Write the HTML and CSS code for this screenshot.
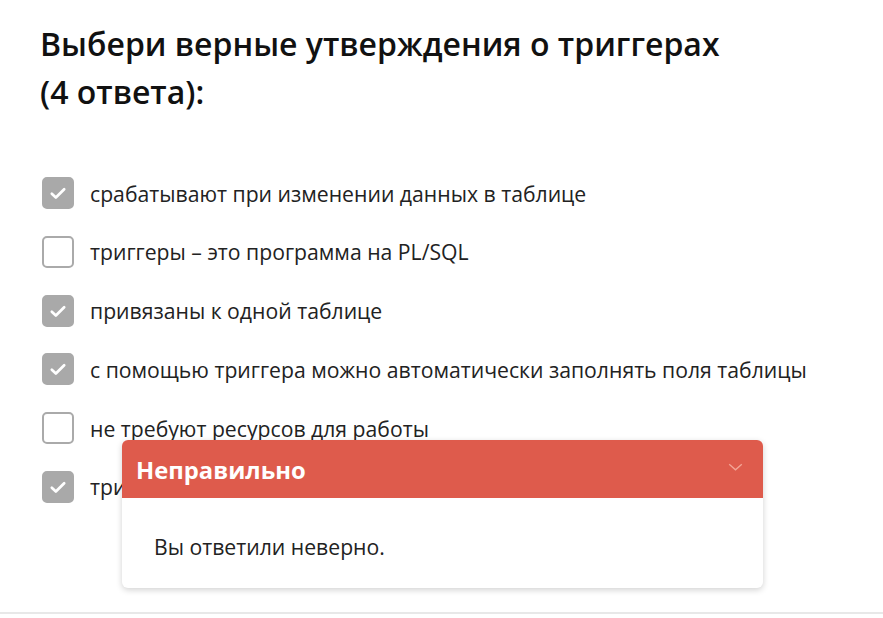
FILE: index.html
```html
<!DOCTYPE html>
<html lang="ru">
<head>
<meta charset="utf-8">
<link rel="stylesheet" href="styles.css">
</head>
<body>
<div class="page">
  <h1 class="title">Выбери верные утверждения о триггерах<br>(4 ответа):</h1>
  <ul class="options">
    <li class="option"><span class="box checked"><svg viewBox="0 0 16 16" width="18" height="18"><path d="M2.5 8.6l3.6 3.4L13.5 4.6" fill="none" stroke="#fff" stroke-width="2.4" stroke-linecap="round" stroke-linejoin="round"/></svg></span>срабатывают при изменении данных в таблице</li>
    <li class="option"><span class="box"></span>триггеры – это программа на PL/SQL</li>
    <li class="option"><span class="box checked"><svg viewBox="0 0 16 16" width="18" height="18"><path d="M2.5 8.6l3.6 3.4L13.5 4.6" fill="none" stroke="#fff" stroke-width="2.4" stroke-linecap="round" stroke-linejoin="round"/></svg></span>привязаны к одной таблице</li>
    <li class="option"><span class="box checked"><svg viewBox="0 0 16 16" width="18" height="18"><path d="M2.5 8.6l3.6 3.4L13.5 4.6" fill="none" stroke="#fff" stroke-width="2.4" stroke-linecap="round" stroke-linejoin="round"/></svg></span>с помощью триггера можно автоматически заполнять поля таблицы</li>
    <li class="option"><span class="box"></span>не требуют ресурсов для работы</li>
    <li class="option"><span class="box checked"><svg viewBox="0 0 16 16" width="18" height="18"><path d="M2.5 8.6l3.6 3.4L13.5 4.6" fill="none" stroke="#fff" stroke-width="2.4" stroke-linecap="round" stroke-linejoin="round"/></svg></span>триггеры выполняются в рамках транзакции</li>
  </ul>
  <div class="divider"></div>
  <div class="popup">
    <div class="popup-head">
      <span class="popup-title">Неправильно</span>
      <svg class="chev" viewBox="0 0 16 10" width="15" height="9"><path d="M1 1.5l7 6 7-6" fill="none" stroke="#f3a596" stroke-width="1.5"/></svg>
    </div>
    <div class="popup-body">Вы ответили неверно.</div>
  </div>
</div>
</body>
</html>
```
FILE: styles.css
```css
html, body {
  margin: 0;
  padding: 0;
  background: #fff;
}
body {
  font-family: "Open Sans", "Noto Sans", sans-serif;
  color: #222;
  width: 883px;
  height: 618px;
  overflow: hidden;
}
.page {
  position: relative;
  height: 618px;
  display: flex;
  flex-direction: column;
}
.title {
  margin: 20px 0 0 40px;
  font-size: 32px;
  font-weight: 600;
  line-height: 48px;
  color: #111;
}
.options {
  list-style: none;
  margin: 61px 0 0 42px;
  padding: 0;
  display: flex;
  flex-direction: column;
  gap: 26.8px;
}
.option {
  display: flex;
  align-items: center;
  height: 32px;
  font-size: 21.2px;
  color: #222;
}
.box {
  width: 32px;
  height: 32px;
  box-sizing: border-box;
  border: 2px solid #aaa;
  border-radius: 5px;
  margin-right: 16px;
  display: flex;
  align-items: center;
  justify-content: center;
  flex: none;
}
.box.checked {
  background: #a9a9a9;
  border-color: #a9a9a9;
}
.divider {
  margin-top: auto;
  margin-bottom: 4px;
  height: 2px;
  background: #e8e8e8;
}
.popup {
  position: absolute;
  left: 122px;
  top: 440px;
  width: 641px;
  height: 148px;
  background: #fff;
  border-radius: 6px;
  box-shadow: 0 2px 6px rgba(0,0,0,0.18);
  overflow: hidden;
}
.popup-head {
  height: 58px;
  background: #de5b4c;
  display: flex;
  align-items: center;
  justify-content: space-between;
  padding: 0 20px 0 14px;
}
.popup-title {
  color: #fff;
  font-size: 23.8px;
  font-weight: 700;
  margin-top: 2px;
}
.chev {
  margin-top: -4px;
}
.popup-body {
  padding: 34px 0 0 32px;
  font-size: 21.2px;
  color: #222;
}
```
